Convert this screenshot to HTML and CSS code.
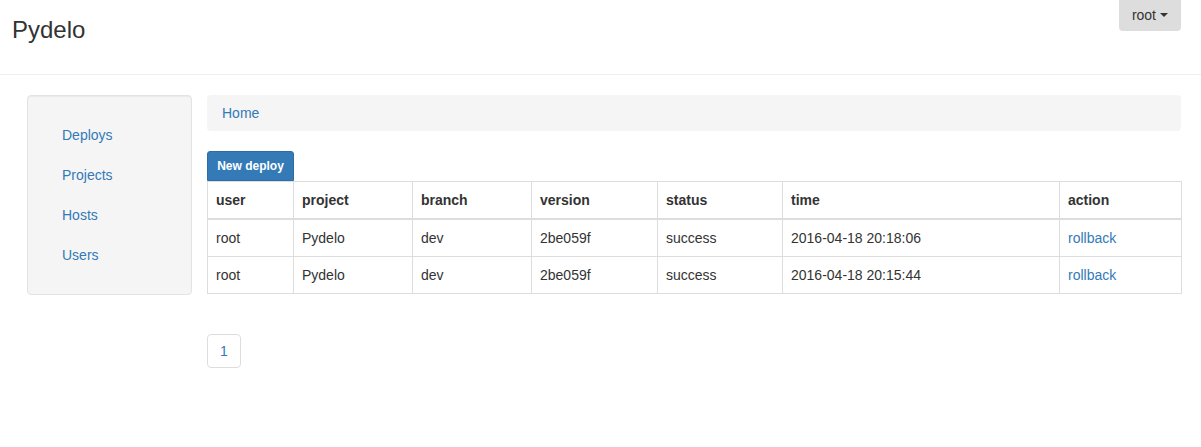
FILE: index.html
```html
<!DOCTYPE html>
<html>
<head>
<meta charset="utf-8">
<title>Pydelo</title>
<link rel="stylesheet" href="styles.css">
</head>
<body>
<header class="topbar">
  <a class="brand" href="#">Pydelo</a>
  <button class="user-btn" type="button">root <span class="caret"></span></button>
</header>
<div class="layout">
  <aside class="sidebar">
    <ul class="side-nav">
      <li><a href="#">Deploys</a></li>
      <li><a href="#">Projects</a></li>
      <li><a href="#">Hosts</a></li>
      <li><a href="#">Users</a></li>
    </ul>
  </aside>
  <main class="main">
    <ol class="breadcrumb"><li><a href="#">Home</a></li></ol>
    <button class="btn-primary" type="button">New deploy</button>
    <table class="grid">
      <colgroup>
        <col class="c-user"><col class="c-project"><col class="c-branch"><col class="c-version"><col class="c-status"><col class="c-time"><col class="c-action">
      </colgroup>
      <thead>
        <tr><th>user</th><th>project</th><th>branch</th><th>version</th><th>status</th><th>time</th><th>action</th></tr>
      </thead>
      <tbody>
        <tr><td>root</td><td>Pydelo</td><td>dev</td><td>2be059f</td><td>success</td><td>2016-04-18 20:18:06</td><td><a href="#">rollback</a></td></tr>
        <tr><td>root</td><td>Pydelo</td><td>dev</td><td>2be059f</td><td>success</td><td>2016-04-18 20:15:44</td><td><a href="#">rollback</a></td></tr>
      </tbody>
    </table>
    <ul class="pagination"><li><a href="#">1</a></li></ul>
  </main>
</div>
</body>
</html>
```
FILE: styles.css
```css
* { box-sizing: border-box; }
html, body { margin: 0; padding: 0; }
body {
  font-family: "Liberation Sans", Arial, Helvetica, sans-serif;
  font-size: 14px;
  line-height: 20px;
  color: #333;
  background: #fff;
}
a { color: #337ab7; text-decoration: none; }

.topbar {
  height: 75px;
  border-bottom: 1px solid #eee;
  display: flex;
  justify-content: space-between;
  align-items: flex-start;
  padding: 0 20px 0 12px;
}
.brand {
  color: #333;
  font-size: 24px;
  line-height: 24px;
  padding-top: 18px;
}
.user-btn {
  font-family: inherit;
  font-size: 14px;
  line-height: 20px;
  color: #333;
  background: #ddd;
  border: 0;
  border-radius: 0 0 4px 4px;
  padding: 5px 13px 6px;
  display: flex;
  align-items: center;
  gap: 4px;
}
.caret {
  display: inline-block;
  width: 0;
  height: 0;
  border-top: 4px solid #333;
  border-left: 4px solid transparent;
  border-right: 4px solid transparent;
}

.layout {
  display: flex;
  gap: 15px;
  padding: 20px 20px 0 27px;
}
.sidebar {
  width: 165px;
  flex: none;
  height: 200px;
  background: #f5f5f5;
  border: 1px solid #e3e3e3;
  border-radius: 4px;
  box-shadow: inset 0 1px 1px rgba(0,0,0,.05);
  padding: 19px 19px;
}
.side-nav { list-style: none; margin: 0; padding: 0; }
.side-nav a { display: block; padding: 10px 15px; }

.main { flex: 1; min-width: 0; }
.breadcrumb {
  list-style: none;
  margin: 0 0 20px;
  padding: 8px 15px;
  background: #f5f5f5;
  border-radius: 4px;
}
.btn-primary {
  display: block;
  font-family: inherit;
  font-size: 12px;
  font-weight: bold;
  line-height: 18px;
  white-space: nowrap;
  text-align: center;
  color: #fff;
  background: #337ab7;
  border: 1px solid #2e6da4;
  border-radius: 3px 3px 0 0;
  padding: 5px 0;
  width: 87px;
  height: 30px;
}
.grid {
  width: 100%;
  border-collapse: collapse;
  table-layout: fixed;
  border: 1px solid #ddd;
  margin-bottom: 40px;
}
.c-user { width: 86px; }
.c-project { width: 119px; }
.c-branch { width: 119px; }
.c-version { width: 126px; }
.c-status { width: 125px; }
.c-time { width: 277px; }
.c-action { width: 122px; }
.grid th, .grid td {
  border: 1px solid #ddd;
  padding: 8px;
  text-align: left;
  vertical-align: top;
  line-height: 20px;
}
.grid th { font-weight: bold; border-bottom-width: 2px; }

.pagination { list-style: none; margin: 0; padding: 0; display: flex; }
.pagination a {
  display: block;
  padding: 6px 12px;
  border: 1px solid #ddd;
  border-radius: 4px;
  line-height: 20px;
}
```
